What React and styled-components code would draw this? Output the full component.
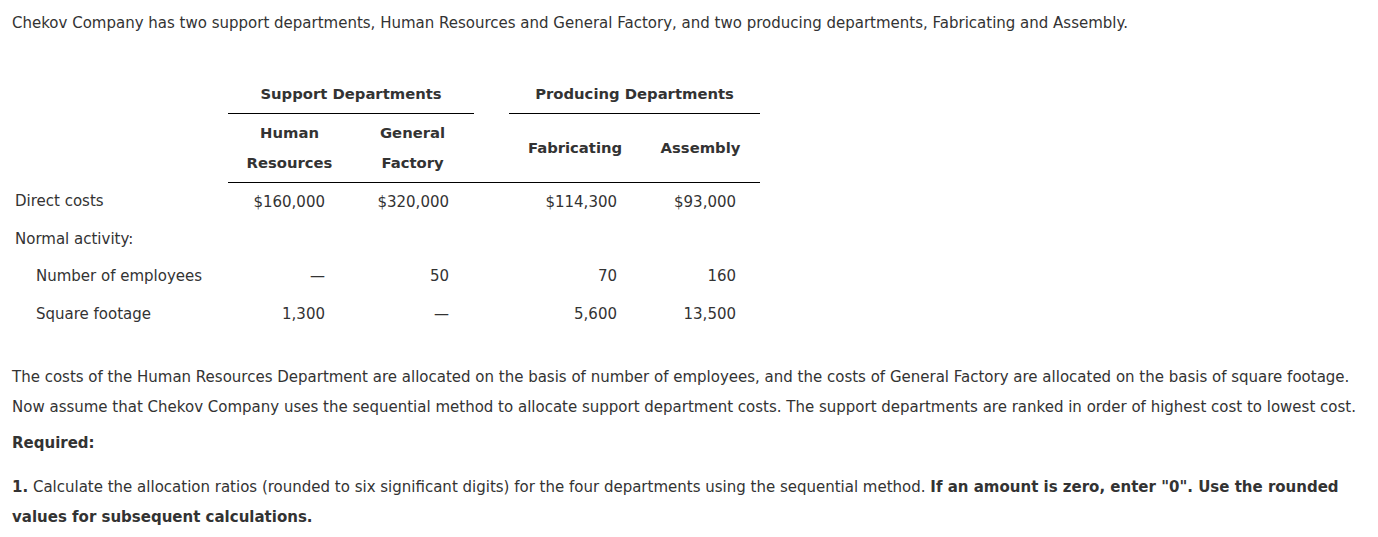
import React from "react";
import styled, { createGlobalStyle } from "styled-components";

const Global = createGlobalStyle`
  html, body { margin: 0; padding: 0; background: #fff; }
  body {
    font-family: "DejaVu Sans", Verdana, sans-serif;
    font-size: 15px;
    color: #333;
  }
`;

const Page = styled.div`
  padding: 8px 8px 0 12px;
`;

const Para = styled.p`
  margin: ${(p) => p.$mt || 0}px 0 0 0;
  line-height: 30px;
  font-weight: ${(p) => (p.$bold ? 700 : 400)};
`;

const Table = styled.table`
  border-collapse: collapse;
  table-layout: fixed;
  width: 748px;
  margin-top: 37px;
`;

const HeadCell = styled.th`
  font-weight: 700;
  font-size: 14.8px;
  text-align: center;
  padding: 0;
  height: ${(p) => p.$h || 38}px;
  line-height: 30px;
  vertical-align: middle;
  border-bottom: ${(p) => (p.$line ? "1px solid #000" : "none")};
`;

const Label = styled.td`
  padding: 0 0 0 ${(p) => (p.$indent ? 24 : 3)}px;
  height: 37.5px;
  vertical-align: middle;
  white-space: nowrap;
`;

const Num = styled.td`
  padding: 0 ${(p) => p.$pr || 25}px 0 0;
  text-align: right;
  vertical-align: middle;
  white-space: nowrap;
`;

const Gap = styled.td`
  padding: 0;
`;

const Strong = styled.strong`
  font-weight: 700;
`;

const rows = [
  { label: "Direct costs", vals: ["$160,000", "$320,000", "$114,300", "$93,000"] },
  { label: "Normal activity:", vals: ["", "", "", ""] },
  { label: "Number of employees", indent: true, vals: ["\u2014", "50", "70", "160"] },
  { label: "Square footage", indent: true, vals: ["1,300", "\u2014", "5,600", "13,500"] },
];

export default function App() {
  return (
    <>
      <Global />
      <Page>
        <Para>
          Chekov Company has two support departments, Human Resources and General Factory, and two producing departments, Fabricating and Assembly.
        </Para>
        <Table>
          <colgroup>
            <col style={{ width: 216 }} />
            <col style={{ width: 123 }} />
            <col style={{ width: 123 }} />
            <col style={{ width: 35 }} />
            <col style={{ width: 132 }} />
            <col style={{ width: 119 }} />
          </colgroup>
          <thead>
            <tr>
              <HeadCell />
              <HeadCell colSpan={2} $line>Support Departments</HeadCell>
              <HeadCell />
              <HeadCell colSpan={2} $line>Producing Departments</HeadCell>
            </tr>
            <tr>
              <HeadCell $h={68} />
              <HeadCell $h={68} $line>Human<br />Resources</HeadCell>
              <HeadCell $h={68} $line>General<br />Factory</HeadCell>
              <HeadCell $h={68} $line />
              <HeadCell $h={68} $line>Fabricating</HeadCell>
              <HeadCell $h={68} $line>Assembly</HeadCell>
            </tr>
          </thead>
          <tbody>
            {rows.map((r) => (
              <tr key={r.label}>
                <Label $indent={r.indent}>{r.label}</Label>
                <Num $pr={26}>{r.vals[0]}</Num>
                <Num $pr={25}>{r.vals[1]}</Num>
                <Gap />
                <Num $pr={24}>{r.vals[2]}</Num>
                <Num $pr={24}>{r.vals[3]}</Num>
              </tr>
            ))}
          </tbody>
        </Table>
        <Para $mt={29}>
          The costs of the Human Resources Department are allocated on the basis of number of employees, and the costs of General Factory are allocated on the basis of square footage.
        </Para>
        <Para>
          Now assume that Chekov Company uses the sequential method to allocate support department costs. The support departments are ranked in order of highest cost to lowest cost.
        </Para>
        <Para $mt={6} $bold>Required:</Para>
        <Para $mt={14}>
          <Strong>1.</Strong> Calculate the allocation ratios (rounded to six significant digits) for the four departments using the sequential method.{" "}
          <Strong>If an amount is zero, enter "0". Use the rounded values for subsequent calculations.</Strong>
        </Para>
      </Page>
    </>
  );
}
